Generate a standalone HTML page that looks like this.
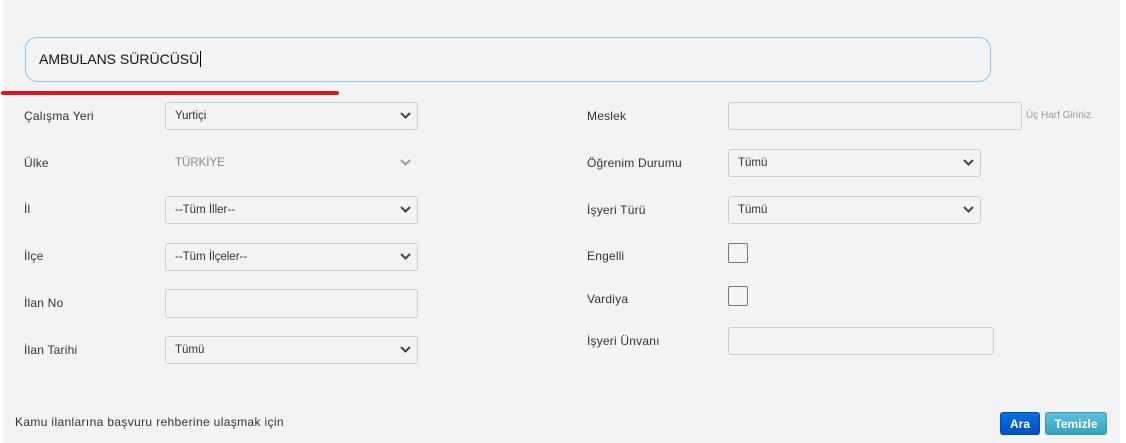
<!DOCTYPE html>
<html><head><meta charset="utf-8"><style>
body{margin:0;width:1126px;height:443px;background:#fff;font-family:"Liberation Sans","DejaVu Sans",sans-serif;overflow:hidden;position:relative}
#p{position:absolute;left:3px;top:0;width:1117px;height:443px;background:#f2f3f5}
.a{position:absolute}
.lbl{position:absolute;font-size:12px;color:#333;letter-spacing:.2px}
.sel,.inp{position:absolute;box-sizing:border-box;border:1px solid #ccc;border-radius:3px;background:#f2f3f5;font-size:11.5px;color:#333;padding-left:9px;display:flex;align-items:center}
.sel svg{position:absolute;right:6px;top:50%;margin-top:-4px}
.cb{position:absolute;width:20px;height:20px;box-sizing:border-box;border:1px solid #777;border-radius:2px;background:#f2f3f5}
.btn{position:absolute;height:23px;top:412px;border-radius:3px;color:#fff;font-size:12px;font-weight:bold;display:flex;align-items:center;justify-content:center}
</style></head><body>
<div id="p"></div>
<div class="a" style="left:25px;top:37px;width:966px;height:45px;box-sizing:border-box;border:1px solid #8ec5ef;border-radius:12px;background:#f2f3f5"></div>
<div class="a" style="left:39px;top:51px;font-size:14px;color:#111">AMBULANS SÜRÜCÜSÜ<span style="border-left:1px solid #000;margin-left:1px"></span></div>
<div class="a" style="left:1px;top:91px;width:338px;height:4px;background:#e3151b;border-radius:2px"></div>

<div class="lbl" style="left:24px;top:109px">Çalışma Yeri</div>
<div class="lbl" style="left:24px;top:156px">Ülke</div>
<div class="lbl" style="left:24px;top:202px">İl</div>
<div class="lbl" style="left:24px;top:249px">İlçe</div>
<div class="lbl" style="left:24px;top:296px">İlan No</div>
<div class="lbl" style="left:24px;top:343px">İlan Tarihi</div>

<div class="sel" style="left:165px;top:102px;width:253px;height:28px">Yurtiçi<svg width="11" height="7"><path d="M1 1l4.5 4.5L10 1" stroke="#444" stroke-width="2" fill="none"/></svg></div>
<div class="sel" style="left:165px;top:149px;width:253px;height:28px;border-color:transparent;color:#888">TÜRKİYE<svg width="11" height="7"><path d="M1 1l4.5 4.5L10 1" stroke="#999" stroke-width="2" fill="none"/></svg></div>
<div class="sel" style="left:165px;top:196px;width:253px;height:28px">--Tüm İller--<svg width="11" height="7"><path d="M1 1l4.5 4.5L10 1" stroke="#444" stroke-width="2" fill="none"/></svg></div>
<div class="sel" style="left:165px;top:243px;width:253px;height:28px">--Tüm İlçeler--<svg width="11" height="7"><path d="M1 1l4.5 4.5L10 1" stroke="#444" stroke-width="2" fill="none"/></svg></div>
<div class="inp" style="left:165px;top:289px;width:253px;height:29px"></div>
<div class="sel" style="left:165px;top:336px;width:253px;height:28px">Tümü<svg width="11" height="7"><path d="M1 1l4.5 4.5L10 1" stroke="#444" stroke-width="2" fill="none"/></svg></div>

<div class="lbl" style="left:587px;top:109px">Meslek</div>
<div class="lbl" style="left:587px;top:156px">Öğrenim Durumu</div>
<div class="lbl" style="left:587px;top:203px">İşyeri Türü</div>
<div class="lbl" style="left:587px;top:249px">Engelli</div>
<div class="lbl" style="left:587px;top:292px">Vardiya</div>
<div class="lbl" style="left:587px;top:334px">İşyeri Ünvanı</div>

<div class="inp" style="left:728px;top:102px;width:294px;height:28px"></div>
<div class="a" style="left:1026px;top:110px;font-size:10px;color:#999">Üç Harf Giriniz.</div>
<div class="sel" style="left:728px;top:149px;width:253px;height:28px">Tümü<svg width="11" height="7"><path d="M1 1l4.5 4.5L10 1" stroke="#444" stroke-width="2" fill="none"/></svg></div>
<div class="sel" style="left:728px;top:196px;width:253px;height:28px">Tümü<svg width="11" height="7"><path d="M1 1l4.5 4.5L10 1" stroke="#444" stroke-width="2" fill="none"/></svg></div>
<div class="cb" style="left:728px;top:243px"></div>
<div class="cb" style="left:728px;top:286px"></div>
<div class="inp" style="left:728px;top:327px;width:266px;height:28px"></div>

<div class="a" style="left:15px;top:415px;font-size:12px;color:#333;letter-spacing:.35px">Kamu ilanlarına başvuru rehberine ulaşmak için</div>
<div class="btn" style="left:1000px;width:40px;background:linear-gradient(#0a6fe0,#0050c0);border:1px solid #0048b0;box-sizing:border-box">Ara</div>
<div class="btn" style="left:1045px;width:62px;background:linear-gradient(#5cc0dd,#3a9fbf);border:1px solid #3a98b8;box-sizing:border-box">Temizle</div>
</body></html>
